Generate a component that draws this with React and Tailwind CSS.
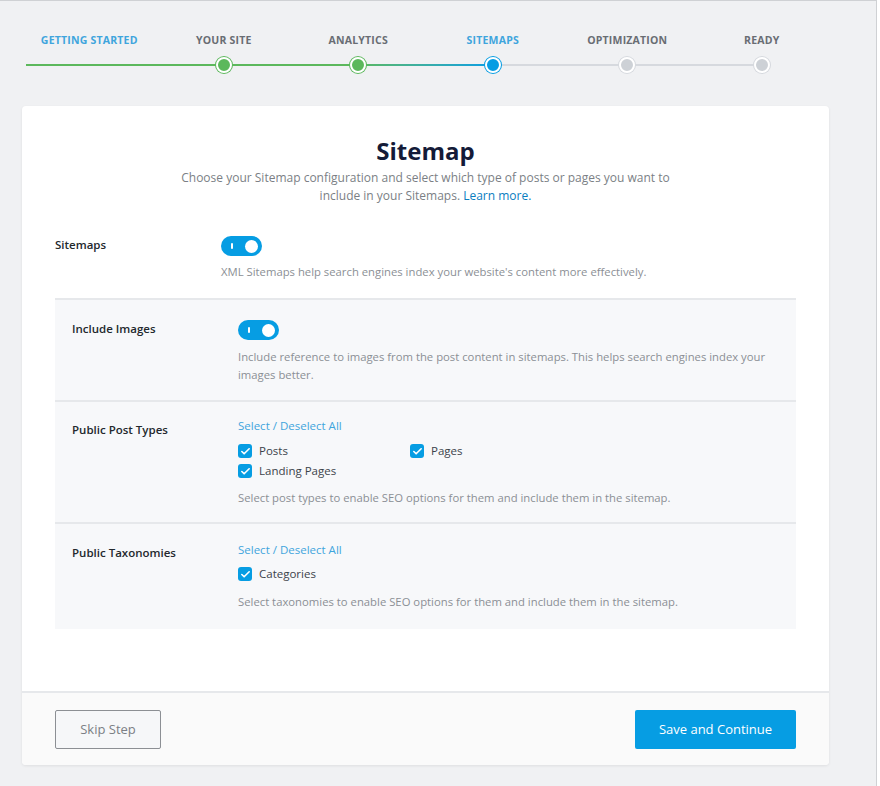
import { Check } from "lucide-react";

const steps = [
  { label: "Getting Started", state: "start" },
  { label: "Your Site", state: "done" },
  { label: "Analytics", state: "done" },
  { label: "Sitemaps", state: "active" },
  { label: "Optimization", state: "todo" },
  { label: "Ready", state: "todo" },
];

const Toggle = () => (
  <div className="flex h-[20px] w-[41px] items-center justify-between rounded-full bg-[#069de3] pl-[10px] pr-[4px]">
    <span className="h-[6px] w-[2px] rounded bg-white" />
    <span className="h-[13px] w-[13px] rounded-full bg-white" />
  </div>
);

const Box = ({ label }) => (
  <label className="flex items-center gap-[7px] text-[11.5px] leading-[20px] text-[#3c434a]">
    <span className="flex h-[14px] w-[14px] items-center justify-center rounded-[3px] bg-[#069de3]">
      <Check size={11} strokeWidth={3.5} color="white" />
    </span>
    {label}
  </label>
);

const Stepper = () => (
  <div className="relative mx-[22px] w-[807px] pt-[32px]">
    <div className="absolute left-[4px] top-[63px] h-[2px] w-[332px] bg-[#5cb85c]" />
    <div className="absolute left-[336px] top-[63px] h-[2px] w-[135px] bg-gradient-to-r from-[#5cb85c] to-[#069de3]" />
    <div className="absolute left-[471px] top-[63px] h-[2px] w-[269px] bg-[#d6d9de]" />
    <div className="relative flex">
      {steps.map((s) => (
        <div key={s.label} className="flex w-[134.5px] flex-col items-center">
          <div
            className={
              "text-[10.5px] font-bold uppercase leading-[14px] tracking-[0.2px] " +
              (s.state === "start" || s.state === "active" ? "text-[#3fa5dd]" : "text-[#696d73]")
            }
          >
            {s.label}
          </div>
          <div className="mt-[10px] flex h-[16px] items-center">
            {s.state === "done" && (
              <span className="h-[16px] w-[16px] rounded-full border-2 border-white bg-[#5cb85c] ring-1 ring-[#5cb85c]" />
            )}
            {s.state === "active" && (
              <span className="h-[16px] w-[16px] rounded-full border-2 border-white bg-[#069de3] ring-1 ring-[#069de3]" />
            )}
            {s.state === "todo" && (
              <span className="h-[16px] w-[16px] rounded-full border-2 border-white bg-[#cdd1d6] ring-1 ring-[#d6d9de]" />
            )}
          </div>
        </div>
      ))}
    </div>
  </div>
);

const Row = ({ label, labelPt, children, className }) => (
  <div className={"flex " + className}>
    <div
      className={"w-[166px] shrink-0 text-[11.5px] font-semibold leading-[18px] text-[#23282d] " + labelPt}
    >
      {label}
    </div>
    <div className="flex-1">{children}</div>
  </div>
);

const Desc = ({ children, className }) => (
  <p className={"text-[11.3px] leading-[18px] text-[#8b8f95] " + (className || "")}>{children}</p>
);

export default function App() {
  return (
    <div
      className="min-h-[786px] w-[877px] border-r border-t border-[#cfd1d4] bg-[#f0f1f3] pb-[20px]"
      style={{ fontFamily: '"Open Sans", "Noto Sans", sans-serif' }}
    >
      <Stepper />

      <div className="mx-[22px] mt-[33px] w-[807px] overflow-hidden rounded-[4px] bg-white shadow-[0_1px_3px_rgba(0,0,0,0.08)]">
        <div className="px-[33px] pt-[29px] pb-[62px]">
          <h1 className="text-center text-[24px] font-bold leading-[32px] text-[#141b38]">Sitemap</h1>
          <p className="mx-auto mt-[2px] w-[500px] text-center text-[12px] leading-[18px] text-[#7b7f85]">
            Choose your Sitemap configuration and select which type of posts or pages you want to include in your
            Sitemaps. <span className="text-[#0a7dbf]">Learn more.</span>
          </p>

          <Row label="Sitemaps" labelPt="pt-0" className="mt-[31px] pb-[17px]">
            <Toggle />
            <Desc className="mt-[7px]">
              XML Sitemaps help search engines index your website's content more effectively.
            </Desc>
          </Row>

          <div className="border-t-2 border-[#e6e8eb] bg-[#f7f8fa] px-[17px]">
            <Row label="Include Images" labelPt="pt-0" className="pt-[20px] pb-[16px]">
              <Toggle />
              <Desc className="mt-[8px]">
                Include reference to images from the post content in sitemaps. This helps search engines index your
                images better.
              </Desc>
            </Row>
          </div>

          <div className="border-t-2 border-[#e6e8eb] bg-[#f7f8fa] px-[17px]">
            <Row label="Public Post Types" labelPt="pt-[4px]" className="pt-[15px] pb-[15px]">
              <div className="text-[11.5px] leading-[18px] text-[#3fa5dd]">Select / Deselect All</div>
              <div className="mt-[6px] grid grid-cols-[172px_1fr]">
                <Box label="Posts" />
                <Box label="Pages" />
                <Box label="Landing Pages" />
              </div>
              <Desc className="mt-[8px]">
                Select post types to enable SEO options for them and include them in the sitemap.
              </Desc>
            </Row>
          </div>

          <div className="border-t-2 border-[#e6e8eb] bg-[#f7f8fa] px-[17px]">
            <Row label="Public Taxonomies" labelPt="pt-[3px]" className="pt-[17px] pb-[18px]">
              <div className="text-[11.5px] leading-[18px] text-[#3fa5dd]">Select / Deselect All</div>
              <div className="mt-[5px]">
                <Box label="Categories" />
              </div>
              <Desc className="mt-[9px]">
                Select taxonomies to enable SEO options for them and include them in the sitemap.
              </Desc>
            </Row>
          </div>
        </div>

        <div className="flex items-center justify-between border-t-2 border-[#e6e8eb] bg-[#fafafa] px-[33px] pt-[17px] pb-[16px]">
          <button className="h-[39px] w-[106px] rounded-[2px] border border-[#8c8f94] bg-[#f6f7f9] text-[13px] text-[#7b7f85]">
            Skip Step
          </button>
          <button className="h-[39px] w-[161px] rounded-[2px] bg-[#069de3] text-[13px] text-white">
            Save and Continue
          </button>
        </div>
      </div>
    </div>
  );
}
